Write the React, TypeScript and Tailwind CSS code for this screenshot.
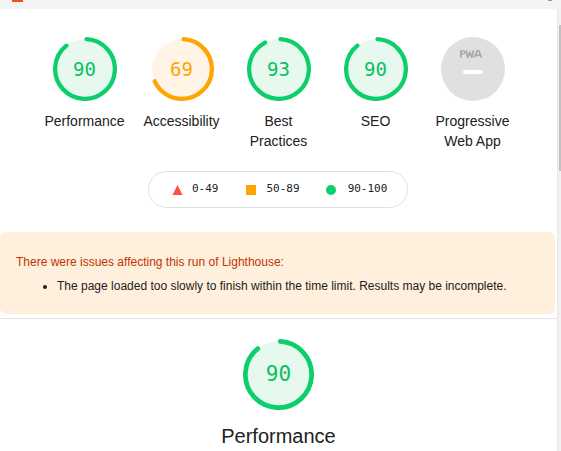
const categories = [
  { label: ['Performance'], score: 90 },
  { label: ['Accessibility'], score: 69 },
  { label: ['Best', 'Practices'], score: 93 },
  { label: ['SEO'], score: 90 },
]

function Gauge({ score, size }: { score: number; size: number }) {
  const pass = score >= 90
  const stroke = pass ? '#0cce6b' : '#ffa400'
  const fill = pass ? '#e7f9ef' : '#fff4e5'
  const r = 56
  const circ = 2 * Math.PI * r
  return (
    <div className="relative" style={{ width: size, height: size }}>
      <svg viewBox="0 0 120 120" className="w-full h-full">
        <circle cx="60" cy="60" r={r} fill={fill} stroke="none" />
        <circle
          cx="60"
          cy="60"
          r={r}
          fill="none"
          stroke={stroke}
          strokeWidth={8}
          strokeLinecap="round"
          strokeDasharray={`${(score / 100) * circ - 6} ${circ}`}
          transform="rotate(-87 60 60)"
        />
      </svg>
      <div
        className={`absolute inset-0 flex items-center justify-center font-['DejaVu_Sans_Mono',monospace] ${
          pass ? 'text-[#0cbf63]' : 'text-[#ffa400]'
        } ${size > 66 ? 'text-[21px]' : 'text-[19px]'}`}
      >
        {score}
      </div>
    </div>
  )
}

function PwaGauge() {
  return (
    <div className="w-[64px] h-[64px] rounded-full bg-[#e0e0e0] flex flex-col items-center pt-[13px]">
      <svg viewBox="0 0 26 8" className="w-[25px] h-[8px]">
        <path
          d="M0 0h3.6a2.3 2.3 0 010 4.6H1.8V8H0zM1.8 1.4v1.8h1.6a0.9 0.9 0 000-1.8z"
          fill="#a8a8a8"
          fillRule="evenodd"
        />
        <path
          d="M6.4 0.2l1.6 7.6 2.2-5.4 2.2 5.4 1.6-7.6M15 7.8l3-7.6h1.4l3 7.6M17 5.4h4.4"
          fill="none"
          stroke="#a8a8a8"
          strokeWidth={1.7}
        />
      </svg>
      <div className="mt-[12px] w-[20px] h-[4px] rounded-full bg-white" />
    </div>
  )
}

export default function App() {
  return (
    <div className="w-[561px] h-[451px] overflow-hidden bg-white font-['Liberation_Sans',Arial,sans-serif] text-[#212121]">
      {/* barra superior */}
      <div className="h-[9px] bg-[#f3f3f3] relative">
        <div className="absolute left-[12px] top-0 w-[11px] h-[2px] bg-[#f4511e]" />
        <div className="absolute left-[548px] top-0 w-[4px] h-[1px] bg-[#999]" />
      </div>

      <div className="flex">
        <div className="w-[557px]">
          {/* gauges */}
          <div className="flex justify-center pt-[28px]">
            {categories.map((c, i) => (
              <div key={i} className="w-[97px] flex flex-col items-center">
                <Gauge score={c.score} size={64} />
                <div className="mt-[10px] text-[14px] leading-[20px] text-center">
                  {c.label.map((l) => (
                    <div key={l}>{l}</div>
                  ))}
                </div>
              </div>
            ))}
            <div className="w-[97px] flex flex-col items-center">
              <PwaGauge />
              <div className="mt-[10px] text-[14px] leading-[20px] text-center">
                <div>Progressive</div>
                <div>Web App</div>
              </div>
            </div>
          </div>

          {/* leyenda */}
          <div className="flex justify-center mt-[20px] pr-[1px]">
            <div className="flex items-center h-[37px] w-[260px] rounded-full border border-[#e0e0e0] pl-[23px] font-['DejaVu_Sans_Mono',monospace] text-[11px]">
              <svg viewBox="0 0 10 10" className="w-[11px] h-[10px]">
                <polygon points="5,0 10,10 0,10" fill="#ff4e42" />
              </svg>
              <span className="ml-[9px]">0-49</span>
              <span className="ml-[27px] w-[10px] h-[10px] bg-[#ffa400]" />
              <span className="ml-[11px]">50-89</span>
              <span className="ml-[26px] w-[10px] h-[10px] rounded-full bg-[#0cce6b]" />
              <span className="ml-[12px]">90-100</span>
            </div>
          </div>

          {/* aviso */}
          <div className="mt-[24px] mr-[2px] h-[82px] rounded-[6px] bg-[#fef0dd] pl-[16px] pt-[22px] text-[12px]">
            <div className="text-[#c33300] leading-[16px]">
              There were issues affecting this run of Lighthouse:
            </div>
            <ul className="list-disc pl-[41px] mt-[8px] leading-[16px]">
              <li>
                The page loaded too slowly to finish within the time limit.
                Results may be incomplete.
              </li>
            </ul>
          </div>
          <div className="mt-[4px] h-[1px] bg-[#e4e4e4]" />

          {/* rendimiento */}
          <div className="flex flex-col items-center pt-[20px]">
            <Gauge score={90} size={71} />
            <div className="mt-[14px] text-[20px] leading-[24px] text-[#212121]">
              Performance
            </div>
          </div>
        </div>

        {/* scrollbar */}
        <div className="w-[4px] h-[442px] bg-[#f1f1f1] border-l border-[#e8e8e8] relative">
          <div className="absolute left-[1px] top-[16px] w-[2px] h-[146px] bg-[#c1c1c1]" />
        </div>
      </div>
    </div>
  )
}
